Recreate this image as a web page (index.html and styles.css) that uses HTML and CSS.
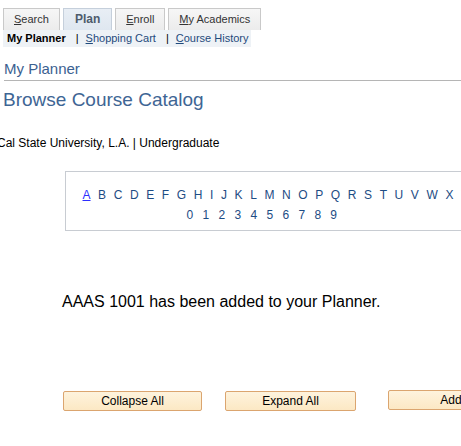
FILE: index.html
```html
<!DOCTYPE html>
<html>
<head>
<meta charset="utf-8">
<link rel="stylesheet" href="styles.css">
</head>
<body>
<div class="tabs">
  <a class="tab"><span class="ak">S</span>earch</a>
  <a class="tab active">Plan</a>
  <a class="tab"><span class="ak">E</span>nroll</a>
  <a class="tab"><span class="ak">M</span>y Academics</a>
</div>
<div class="subnav">
  <span class="current">My Planner</span>
  <span class="sep">|</span>
  <a class="sublink"><span class="ak">S</span>hopping Cart</a>
  <span class="sep">|</span>
  <a class="sublink"><span class="ak">C</span>ourse History</a>
</div>
<h2 class="page-title">My Planner</h2>
<h1 class="catalog-title">Browse Course Catalog</h1>
<div class="institution">Cal State University, L.A. | Undergraduate</div>
<div class="alpha-box">
  <div class="letters">
    <a class="first">A</a><a>B</a><a>C</a><a>D</a><a>E</a><a>F</a><a>G</a><a>H</a><a>I</a><a>J</a><a>K</a><a>L</a><a>M</a><a>N</a><a>O</a><a>P</a><a>Q</a><a>R</a><a>S</a><a>T</a><a>U</a><a>V</a><a>W</a><a>X</a><a>Y</a><a>Z</a>
  </div>
  <div class="digits">
    <a>0</a><a>1</a><a>2</a><a>3</a><a>4</a><a>5</a><a>6</a><a>7</a><a>8</a><a>9</a>
  </div>
</div>
<p class="message">AAAS 1001 has been added to your Planner.</p>
<div class="buttons">
  <button class="btn btn-collapse">Collapse All</button>
  <button class="btn btn-expand">Expand All</button>
  <button class="btn btn-add">Add</button>
</div>
</body>
</html>
```
FILE: styles.css
```css
html, body {
  overflow: hidden;
}
body {
  margin: 0;
  font-family: "Liberation Sans", Arial, sans-serif;
  background: #ffffff;
  color: #000;
  width: 461px;
  height: 446px;
}
.tabs {
  display: flex;
  gap: 3px;
  margin: 8px 0 0 3px;
  height: 22px;
}
.tab {
  display: block;
  box-sizing: border-box;
  height: 22px;
  padding: 0 10px;
  line-height: 21px;
  font-size: 11px;
  color: #333;
  border: 1px solid #c9c9c9;
  border-bottom: none;
  background: linear-gradient(#f6f6f6, #ececec);
  white-space: nowrap;
}
.tab.active {
  font-size: 12px;
  font-weight: bold;
  color: #4d5b6c;
  border-color: #c5cfdb;
  background: linear-gradient(#e8eef5, #dfe7f0);
  padding: 0 11px;
}
.ak {
  text-decoration: underline;
}
.subnav {
  margin-left: 3px;
  width: 248px;
  height: 17px;
  box-sizing: border-box;
  padding-left: 4px;
  background: #eef2f6;
  font-size: 11px;
  line-height: 17px;
  display: flex;
  white-space: nowrap;
}
.current {
  font-weight: bold;
  color: #000;
}
.sep {
  margin: 0 7px 0 10px;
  color: #000;
}
.sublink {
  color: #1f4a7c;
}
.page-title {
  margin: 13px 0 0 4px;
  padding-bottom: 3px;
  border-bottom: 1px solid #b5b5b5;
  font-size: 15px;
  line-height: 17px;
  font-weight: normal;
  color: #3b6191;
}
.catalog-title {
  margin: 8px 0 0 3px;
  font-size: 19px;
  line-height: 22px;
  font-weight: normal;
  color: #3e6594;
}
.institution {
  margin: 25px 0 0 -3px;
  font-size: 12px;
  line-height: 14px;
  color: #000;
  white-space: nowrap;
}
.alpha-box {
  margin: 21px 0 0 65px;
  width: 430px;
  box-sizing: border-box;
  border: 1px solid #c8ccd2;
  padding: 15.5px 0 8.5px 0;
}
.letters, .digits {
  display: flex;
  font-size: 12px;
  line-height: 14px;
  white-space: nowrap;
}
.letters {
  gap: 7.6px;
  padding-left: 16.5px;
}
.digits {
  gap: 9.3px;
  padding-left: 120.5px;
  margin-top: 6px;
}
.letters a, .digits a {
  color: #1d4c84;
}
.letters a.first {
  color: #2e2eff;
  text-decoration: underline;
}
.message {
  margin: 62px 0 0 62px;
  font-size: 16px;
  line-height: 18px;
  color: #000;
}
.buttons {
  display: flex;
  align-items: flex-start;
  margin: 80px 0 0 63px;
  white-space: nowrap;
}
.btn {
  box-sizing: border-box;
  height: 20px;
  padding: 0;
  font-family: "Liberation Sans", Arial, sans-serif;
  font-size: 12px;
  line-height: 18px;
  color: #000;
  border: 1px solid #dba56f;
  border-radius: 2px;
  background: linear-gradient(#fef3dd, #fce8c4);
  flex: none;
}
.btn-collapse {
  width: 139px;
}
.btn-expand {
  width: 131px;
  margin-left: 23px;
}
.btn-add {
  width: 126px;
  margin-left: 32px;
  margin-top: -1px;
}
```
